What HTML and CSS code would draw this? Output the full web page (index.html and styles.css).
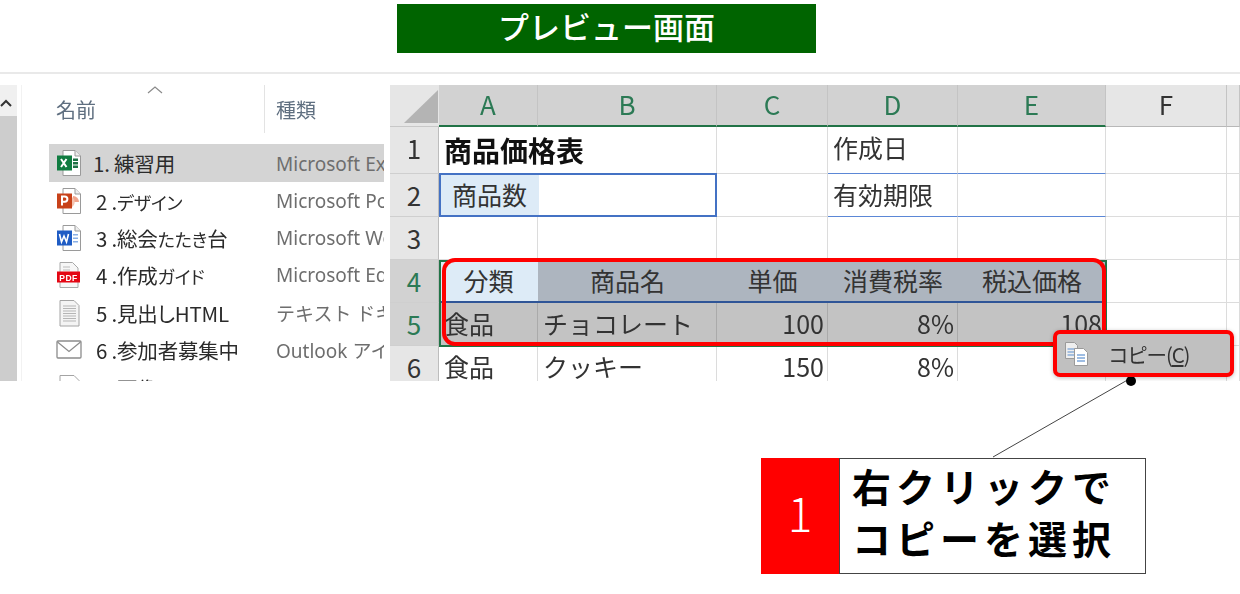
FILE: index.html
```html
<!DOCTYPE html>
<html lang="ja">
<head>
<meta charset="utf-8">
<title>プレビュー画面</title>
<link rel="stylesheet" href="styles.css">
</head>
<body>
<div class="page">
  <h1 class="banner">プレビュー画面</h1>
  <div class="rule"></div>
  <div class="stage">
    <aside class="tree-scroll">
      <div class="tree-scroll-top">
        <svg width="12" height="8" viewBox="0 0 12 8"><path d="M1 7l5-5 5 5" fill="none" stroke="#333" stroke-width="2"/></svg>
      </div>
      <div class="tree-scroll-thumb"></div>
    </aside>
    <section class="explorer">
      <div class="ex-head">
        <svg class="sort" width="16" height="9" viewBox="0 0 16 9"><path d="M1 8l7-6 7 6" fill="none" stroke="#8a8a8a" stroke-width="1.2"/></svg>
        <span class="ex-h-name">名前</span>
        <span class="ex-h-type">種類</span>
      </div>
      <ul class="ex-list">
        <li class="ex-row is-sel">
          <svg class="ic" width="26" height="28" viewBox="0 0 26 28"><path d="M7 1.500h12l5.500 5.500v19.500H7z" fill="#fff" stroke="#9a9a9a"/><path d="M19 1.500v5.500h5.500" fill="#eee" stroke="#9a9a9a"/><path d="M17 9.500h5v2.500h-5zm0 3.500h5v2.500h-5zm0 3.500h5v2.500h-5z" fill="#1e7145"/><rect x="1" y="6.500" width="15" height="15" fill="#107c41"/><path d="M5 10l5.500 8m0-8l-5.500 8" stroke="#fff" stroke-width="2"/></svg>
          <span class="ex-name n1">1. 練習用</span><span class="ex-type">Microsoft Excel ワークシート</span>
        </li>
        <li class="ex-row">
          <svg class="ic" width="26" height="28" viewBox="0 0 26 28"><path d="M7 1.500h12l5.500 5.500v19.500H7z" fill="#fff" stroke="#9a9a9a"/><path d="M19 1.500v5.500h5.500" fill="#eee" stroke="#9a9a9a"/><path d="M17 9v6h6a6 6 0 0 0-6-6z" fill="#f0a48c"/><path d="M16 10a6 6 0 0 1 0 10z" fill="#f6c3b0"/><rect x="1" y="6.500" width="15" height="15" fill="#c8421a"/><path d="M6 18.500v-9h2.800a2.500 2.500 0 0 1 0 5.200H6" fill="none" stroke="#fff" stroke-width="2"/></svg>
          <span class="ex-name">2 .<span class="k">デザイン</span></span><span class="ex-type">Microsoft PowerPoint</span>
        </li>
        <li class="ex-row">
          <svg class="ic" width="26" height="28" viewBox="0 0 26 28"><path d="M7 1.500h12l5.500 5.500v19.500H7z" fill="#fff" stroke="#9a9a9a"/><path d="M19 1.500v5.500h5.500" fill="#eee" stroke="#9a9a9a"/><path d="M17 10h5v1.500h-5zm0 3.500h5v1.500h-5zm0 3.500h5v1.500h-5z" fill="#8ab0e6"/><rect x="1" y="6.500" width="15" height="15" fill="#1f5cc4"/><path d="M3.500 10l2 8 2.500-6 2.500 6 2-8" fill="none" stroke="#fff" stroke-width="1.600"/></svg>
          <span class="ex-name">3 .総会<span class="k">たたき</span>台</span><span class="ex-type">Microsoft Word</span>
        </li>
        <li class="ex-row">
          <svg class="ic" width="26" height="28" viewBox="0 0 26 28"><path d="M4 1.500h12.500L22 7v19.500H4z" fill="#f7f7f7" stroke="#a8a8a8"/><path d="M7 6h7M7 9h7" stroke="#bbb"/><rect x="1" y="10.500" width="23" height="11" fill="#e40613"/><text class="pdf-t" x="12.500" y="19.500" text-anchor="middle">PDF</text></svg>
          <span class="ex-name">4 .作成<span class="k">ガイド</span></span><span class="ex-type">Microsoft Edge PDF</span>
        </li>
        <li class="ex-row">
          <svg class="ic" width="26" height="28" viewBox="0 0 26 28"><path d="M4 1.500h14L23 6.500v20.500H4z" fill="#f4f4f4" stroke="#a4a4a4"/><path d="M7 7h13M7 9.500h13M7 12h13M7 14.500h13M7 17h13M7 19.500h13M7 22h13" stroke="#b5b5b5"/></svg>
          <span class="ex-name">5 .見出しHTML</span><span class="ex-type">テキスト ドキュメント</span>
        </li>
        <li class="ex-row">
          <svg class="ic" width="26" height="28" viewBox="0 0 26 28"><rect x="1" y="5" width="24" height="17" rx="1" fill="#fff" stroke="#8c8c8c" stroke-width="1.300"/><path d="M1.500 6l11.500 9.500L24.500 6" fill="none" stroke="#8c8c8c" stroke-width="1.300"/></svg>
          <span class="ex-name">6 .参加者募集中</span><span class="ex-type">Outlook アイテム</span>
        </li>
        <li class="ex-row">
          <svg class="ic" width="26" height="28" viewBox="0 0 26 28"><path d="M4 1.500h14L23 6.500v20.500H4z" fill="#fff" stroke="#a4a4a4"/></svg>
          <span class="ex-name">7 .画像.JPEG</span><span class="ex-type">JPG ファイル</span>
        </li>
      </ul>
    </section>
    <section class="sheet">
      <div class="corner"><svg width="34" height="33" viewBox="0 0 34 33"><path d="M34 0v33H0z" fill="#b4b4b4"/></svg></div>
      <div class="ch sel">A</div><div class="ch sel">B</div><div class="ch sel">C</div><div class="ch sel">D</div><div class="ch sel">E</div><div class="ch">F</div><div class="ch"></div>

      <div class="rh">1</div>
      <div class="c title span2">商品価格表</div><div class="c"></div><div class="c bb">作成日</div><div class="c bb"></div><div class="c"></div><div class="c"></div>

      <div class="rh">2</div>
      <div class="merged"><span class="lbl">商品数</span></div><div class="c"></div><div class="c bb">有効期限</div><div class="c bb"></div><div class="c"></div><div class="c"></div>

      <div class="rh">3</div>
      <div class="c"></div><div class="c"></div><div class="c"></div><div class="c"></div><div class="c"></div><div class="c"></div><div class="c"></div>

      <div class="rh on">4</div>
      <div class="c th first">分類</div><div class="c th">商品名</div><div class="c th">単価</div><div class="c th">消費税率</div><div class="c th">税込価格</div><div class="c"></div><div class="c"></div>

      <div class="rh on">5</div>
      <div class="c rs">食品</div><div class="c rs">チョコレート</div><div class="c rs num">100</div><div class="c rs num">8%</div><div class="c rs num">108</div><div class="c"></div><div class="c"></div>

      <div class="rh">6</div>
      <div class="c">食品</div><div class="c">クッキー</div><div class="c num">150</div><div class="c num">8%</div><div class="c num">162</div><div class="c"></div><div class="c"></div>

      <div class="sel-box"></div>
      <div class="frame"></div>
    </section>
    <div class="menu">
      <svg width="26" height="26" viewBox="0 0 26 26"><path d="M1.500 1.500h9l3 3v13h-12z" fill="#eee" stroke="#9a9a9a"/><path d="M3.500 8h8M3.500 11h8M3.500 14h8" stroke="#5b8fd0"/><path d="M10.500 7.500h9l4 4v13h-13z" fill="#fff" stroke="#9a9a9a"/><path d="M13 14h8M13 17h8M13 20h8" stroke="#3f7cc8" stroke-width="1.200"/></svg>
      <span class="menu-t">コピー(<u>C</u>)</span>
    </div>
  </div>
  <svg class="leader" width="160" height="90" viewBox="0 0 160 90"><path d="M138 1L0 80" stroke="#444" stroke-width="1" fill="none"/><circle cx="138" cy="4" r="5" fill="#000"/></svg>
  <div class="callout">
    <div class="badge">1</div>
    <div class="note">右クリックで<br>コピーを選択</div>
  </div>
</div>
</body>
</html>
```
FILE: styles.css
```css
* { box-sizing: border-box; }
html, body { margin: 0; padding: 0; background: #fff; }
body { width: 1240px; height: 594px; overflow: hidden; font-family: "Noto Sans CJK JP", "Noto Sans", sans-serif; }
.page { position: relative; width: 1240px; height: 594px; padding-top: 4px; }

.banner { margin: 0 0 0 397px; width: 419px; height: 49px; background: #006400; color: #fff; font-size: 31px; font-weight: 500; line-height: 44px; text-align: center; }
.rule { margin-top: 19px; height: 2px; background: #e9e9e9; }

.stage { position: relative; display: flex; margin-top: 11px; height: 296px; overflow: hidden; filter: blur(.35px); }
.tree-scroll { width: 17px; flex: none; display: flex; flex-direction: column; }
.tree-scroll-top { height: 31px; background: #f0f0f0; display: flex; align-items: center; justify-content: flex-start; }
.tree-scroll-top svg { margin-top: 5px; }
.tree-scroll-thumb { flex: 1; background: #cdcdcd; }

.explorer { width: 363px; margin-left: 4px; flex: none; border-left: 1px solid #f2f2f2; overflow: hidden; }
.ex-head { position: relative; height: 59px; }
.sort { position: absolute; left: 125px; top: 0; }
.ex-h-name, .ex-h-type { position: absolute; top: 10px; font-size: 20px; line-height: 30px; color: #5f6f80; }
.ex-h-name { left: 34px; }
.ex-h-type { left: 254px; }
.ex-head::after { content: ""; position: absolute; left: 242px; top: 0; width: 1px; height: 48px; background: #e3e3e3; }
.ex-list { list-style: none; margin: 0 0 0 27px; padding: 0; }
.ex-row { display: flex; align-items: center; height: 37.4px; white-space: nowrap; overflow: hidden; padding-left: 7px; }
.is-sel { background: #d4d4d4; height: 38px; }
.ic { flex: none; width: 26px; margin-right: 14px; }
.pdf-t { font-family: "Liberation Sans", sans-serif; font-size: 8.500px; font-weight: 700; fill: #fff; letter-spacing: .5px; }
.ex-name { width: 180px; flex: none; font-size: 20.500px; color: #2b2b2b; font-feature-settings: "palt"; letter-spacing: -.2px; }
.k { font-size: 18px; }
.n1 { margin-left: -3px; width: 183px; }
.ex-type { font-size: 19px; color: #6e6e6e; font-family: "Noto Sans", "Noto Sans CJK JP", sans-serif; }

.sheet { position: absolute; left: 390px; top: 0; display: grid; grid-template-columns: 49px 99px 179px 111px 130px 148px 121px 13px; grid-template-rows: 42px 47px 43px 43px 43px 43px 43px; }
.corner { background: #e6e6e6; display: flex; align-items: flex-end; justify-content: flex-end; padding: 0 1px 3px 0; border-bottom: 1px solid #c8c8c8; }
.ch { background: #e6e6e6; border-right: 1px solid #c4c4c4; border-bottom: 1px solid #b8b8b8; text-align: center; font-size: 26px; line-height: 37px; color: #333; }
.ch.sel { background: #d2d2d2; color: #2c7a55; border-bottom: 2px solid #217346; }
.rh { background: #e6e6e6; border-right: 1px solid #bdbdbd; border-bottom: 1px solid #cfcfcf; text-align: center; font-size: 26px; line-height: 41px; color: #333; }
.rh.on { background: #d2d2d2; color: #2c7a55; }
.c { border-right: 1px solid #dcdcdc; border-bottom: 1px solid #dcdcdc; font-size: 25px; line-height: 40px; color: #333; padding: 0 5px; white-space: nowrap; overflow: hidden; }
.span2 { grid-column: span 2; }
.title { font-weight: 700; font-size: 28px; line-height: 46px; color: #111; padding-left: 5px; }
.bb { border-bottom: 1px solid #5b87d6; }
.merged { grid-column: span 2; border: 2px solid #4472c4; display: flex; margin-top: -1px; }
.lbl { width: 98px; background: #ddebf7; font-size: 25px; line-height: 39px; color: #333; padding-left: 11px; }
.th { background: #adb5bf; text-align: center; border-right: 0; border-bottom: 2px solid #2f5597; line-height: 41px; }
.th.first { background: #ddebf7; }
.rs { background: #c3c3c3; border-right: 1px solid #aaa; border-bottom: 0; }
.num { text-align: right; padding-right: 3px; }

.sel-box { position: absolute; left: 49px; top: 175px; width: 668px; height: 87px; border: 2px solid #217346; pointer-events: none; }
.frame { position: absolute; left: 52px; top: 173px; width: 664px; height: 88px; border: 4px solid #f00; border-radius: 13px; }

.menu { position: absolute; left: 1053px; top: 245px; width: 181px; height: 47px; background: #c0c0c0; border: 4px solid #f00; border-radius: 7px; box-shadow: 0 1px 4px rgba(0,0,0,.25); display: flex; align-items: center; padding-left: 7px; }
.menu-t { margin-left: 18px; font-size: 20.500px; letter-spacing: -1.200px; color: #333; white-space: nowrap; }

.leader { position: absolute; left: 993px; top: 377px; }

.callout { display: flex; margin: 77px 0 0 761px; width: 385px; height: 116px; }
.badge { width: 78px; background: #f00; color: #fff; font-size: 46px; font-weight: 300; line-height: 108px; text-align: center; }
.note { width: 307px; background: #fff; border: 1px solid #444; font-size: 39px; font-weight: 700; line-height: 52px; letter-spacing: 5px; color: #000; padding: 0 0 0 12px; white-space: nowrap; }
```
